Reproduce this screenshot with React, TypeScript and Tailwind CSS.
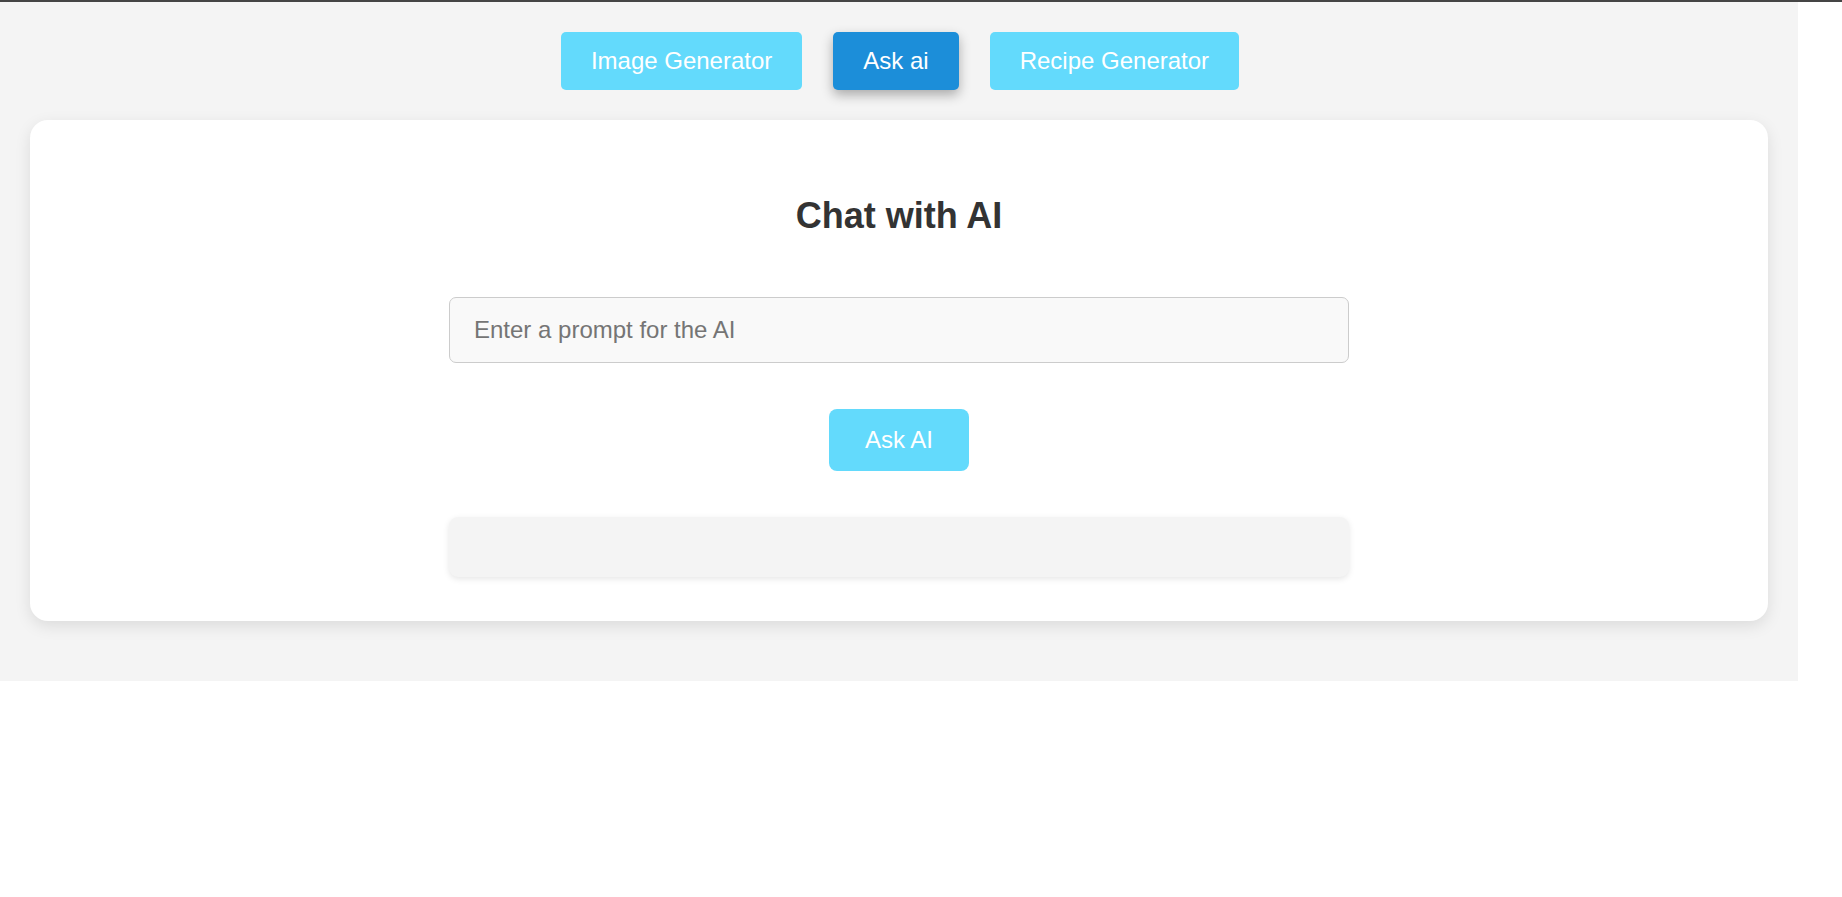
import React, { useState } from "react";

const tabs = ["Image Generator", "Ask ai", "Recipe Generator"];

const App = () => {
  const [active, setActive] = useState("Ask ai");
  const [prompt, setPrompt] = useState("");

  return (
    <div className="min-h-screen bg-white font-['Liberation_Sans',Arial,sans-serif]">
      <div className="h-[2px] w-full bg-[#454545]"></div>
      <div className="w-[1798px] bg-[#f4f4f4] pt-[30px] pb-[60px]">
        {/* Nav */}
        <div className="flex justify-center gap-[31px] pl-[2px]">
          {tabs.map((tab) => (
            <button
              key={tab}
              onClick={() => setActive(tab)}
              className={
                tab === active
                  ? "rounded-[5px] bg-[#1c8ed9] px-[30px] py-[15px] text-[24px] leading-[28px] text-white shadow-[0_5px_12px_rgba(0,0,0,0.3)]"
                  : "rounded-[5px] bg-[#63dafc] px-[30px] py-[15px] text-[24px] leading-[28px] text-white"
              }
            >
              {tab}
            </button>
          ))}
        </div>

        {/* Card */}
        <div className="mx-[30px] mt-[30px] flex flex-col items-center rounded-[18px] bg-white pt-[76px] pb-[44px] shadow-[0_5px_16px_rgba(0,0,0,0.1)]">
          <h2 className="text-[36px] font-bold leading-[40px] text-[#333]">
            Chat with AI
          </h2>
          <input
            type="text"
            value={prompt}
            onChange={(e) => setPrompt(e.target.value)}
            placeholder="Enter a prompt for the AI"
            className="mt-[61px] h-[66px] w-[900px] rounded-[7px] border border-[#cccccc] bg-[#f9f9f9] px-[24px] text-[24px] text-[#333] outline-none placeholder:text-[#757575]"
          />
          <button className="mt-[46px] h-[62px] rounded-[8px] bg-[#63dafc] px-[36px] text-[24px] leading-[28px] text-white">
            Ask AI
          </button>
          <div className="mt-[46px] h-[60px] w-[900px] rounded-[9px] bg-[#f4f4f4] shadow-[0_2px_6px_rgba(0,0,0,0.1)]"></div>
        </div>
      </div>
    </div>
  );
};

export default App;
